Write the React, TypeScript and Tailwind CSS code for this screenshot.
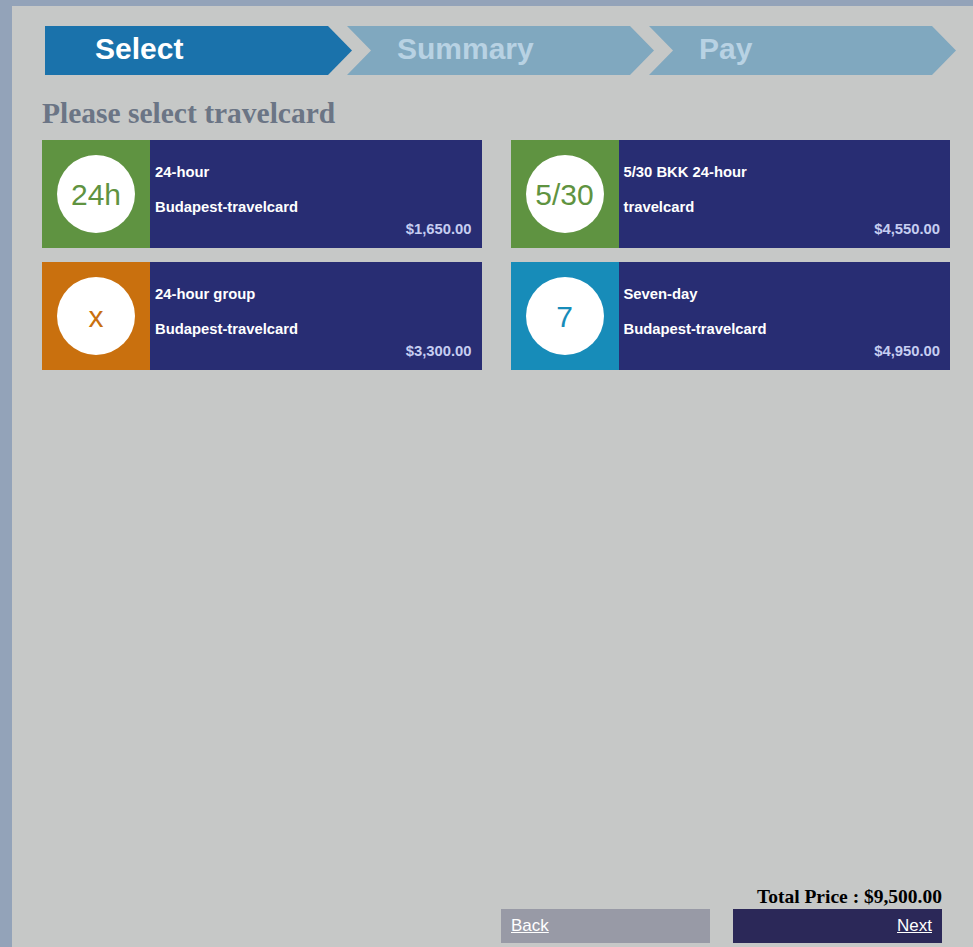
const steps = [
  { label: "Select", active: true, first: true },
  { label: "Summary", active: false, first: false },
  { label: "Pay", active: false, first: false },
]

const cards = [
  { badge: "24h", color: "bg-[#5f9341]", text: "text-[#5f9341]", line1: "24-hour", line2: "Budapest-travelcard", price: "$1,650.00" },
  { badge: "5/30", color: "bg-[#5f9341]", text: "text-[#5f9341]", line1: "5/30 BKK 24-hour", line2: "travelcard", price: "$4,550.00" },
  { badge: "x", color: "bg-[#c9700e]", text: "text-[#c9700e]", line1: "24-hour group", line2: "Budapest-travelcard", price: "$3,300.00" },
  { badge: "7", color: "bg-[#178cb9]", text: "text-[#178cb9]", line1: "Seven-day", line2: "Budapest-travelcard", price: "$4,950.00" },
]

export default function App() {
  return (
    <div className="flex h-[947px] w-full bg-[#93a3b9] pt-[6px] pl-[12px] font-['Liberation_Sans',Arial,sans-serif]">
      <div className="flex min-w-0 flex-1 flex-col bg-[#c6c8c7] pt-5 pl-[30px] pr-[23px]">
        {/* stepper */}
        <div className="ml-[3px] flex">
          {steps.map((s, i) => (
            <div
              key={s.label}
              className={`flex h-[49px] w-[307px] shrink-0 items-center pb-[5px] pl-[50px] text-[30px] font-bold ${i > 0 ? "-ml-[5px]" : ""} ${
                s.active ? "bg-[#1a72ab] text-white" : "bg-[#80a8bf] text-[#b8d2e3]"
              } ${
                s.first
                  ? "[clip-path:polygon(0_0,283px_0,307px_50%,283px_100%,0_100%)]"
                  : "[clip-path:polygon(0_0,283px_0,307px_50%,283px_100%,0_100%,24px_50%)]"
              }`}
            >
              {s.label}
            </div>
          ))}
        </div>

        <h2 className="mt-[22px] font-['Liberation_Serif','Times_New_Roman',serif] text-[29.5px] leading-[32px] font-bold text-[#6b7585]">
          Please select travelcard
        </h2>

        <div className="mt-[11px] grid grid-cols-2 gap-x-[29px] gap-y-[14px]">
          {cards.map((c) => (
            <div key={c.line1} className="flex h-[108px] bg-[#282d73]">
              <div className={`flex w-[108px] shrink-0 items-center justify-center ${c.color}`}>
                <div className={`flex h-[78px] w-[78px] items-center justify-center rounded-full bg-white text-[30px] ${c.text}`}>
                  {c.badge}
                </div>
              </div>
              <div className="flex flex-1 flex-col pt-[23.5px] pr-[10px] pl-[5px] text-[14.8px] leading-[17px] font-bold text-white">
                <p>{c.line1}</p>
                <p className="mt-[18px]">{c.line2}</p>
                <p className="mt-[5px] text-right text-[#c6cdf1]">{c.price}</p>
              </div>
            </div>
          ))}
        </div>

        <div className="mt-auto flex flex-col items-end pb-1 pr-2">
          <p className="font-['Liberation_Serif','Times_New_Roman',serif] text-[19.5px] leading-[22px] font-bold text-black">
            Total Price : $9,500.00
          </p>
          <div className="mt-[1px] flex gap-[23px]">
            <a href="#" className="flex h-[34px] w-[209px] items-center bg-[#989aa6] pl-[10px] text-[17px] text-white underline">
              Back
            </a>
            <a href="#" className="flex h-[34px] w-[209px] items-center justify-end bg-[#2b2858] pr-[10px] text-[17px] text-white underline">
              Next
            </a>
          </div>
        </div>
      </div>
    </div>
  )
}
